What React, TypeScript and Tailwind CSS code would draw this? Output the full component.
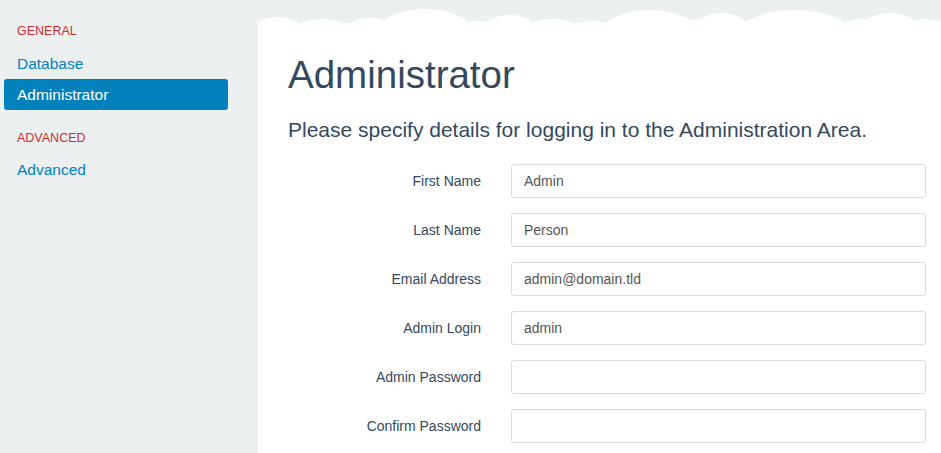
const clouds: [number, number, number][] = [
  [20, 17, 24],
  [64, 19, 32],
  [112, 18, 22],
  [167, 9, 48],
  [220, 21, 20],
  [252, 15, 25],
  [295, 19, 32],
  [335, 21, 24],
  [392, 10, 50],
  [440, 19, 15],
  [464, 13, 25],
  [537, 10, 62],
  [602, 19, 18],
  [632, 13, 26],
  [667, 19, 25],
];

const fields = [
  { label: 'First Name', value: 'Admin' },
  { label: 'Last Name', value: 'Person' },
  { label: 'Email Address', value: 'admin@domain.tld' },
  { label: 'Admin Login', value: 'admin' },
  { label: 'Admin Password', value: '' },
  { label: 'Confirm Password', value: '' },
];

function CloudEdge() {
  return (
    <svg width="683" height="30" viewBox="0 0 683 30" className="block shrink-0">
      {clouds.map(([cx, top, rx], i) => (
        <ellipse key={i} cx={cx} cy={top + rx * 0.5} rx={rx} ry={rx * 0.5} fill="#ffffff" />
      ))}
      <rect x="0" y="23" width="683" height="7" fill="#ffffff" />
    </svg>
  );
}

export default function App() {
  return (
    <div className="flex h-[453px] w-[941px] overflow-hidden bg-[#ecf0f1] font-['Liberation_Sans',Arial,sans-serif]">
      <aside className="w-[258px] shrink-0 pt-[24px]">
        <p className="px-[17px] text-[12.5px] leading-[14px] text-[#c9302c]">GENERAL</p>
        <a className="mt-[17px] block px-[17px] text-[15.5px] leading-[18px] text-[#0081c2]">Database</a>
        <a className="ml-[4px] mt-[6px] block w-[224px] rounded-[3px] bg-[#0081bc] px-[13px] py-[6px] text-[15.5px] leading-[19px] text-white">
          Administrator
        </a>
        <p className="mt-[21px] px-[17px] text-[12.5px] leading-[14px] text-[#c9302c]">ADVANCED</p>
        <a className="mt-[16px] block px-[17px] text-[15.5px] leading-[18px] text-[#0081c2]">Advanced</a>
      </aside>

      <main className="flex min-w-0 flex-1 flex-col">
        <CloudEdge />
        <div className="flex-1 bg-white pl-[30px] pr-[15px]">
          <h1 className="mt-[25px] text-[38.5px] leading-[40px] text-[#34495e]">Administrator</h1>
          <p className="mt-[23px] text-[21px] leading-[24px] text-[#34495e]">
            Please specify details for logging in to the Administration Area.
          </p>
          <div className="mt-[22px] flex flex-col gap-[15px]">
            {fields.map((f) => (
              <div key={f.label} className="flex items-center">
                <label className="w-[193px] shrink-0 text-right text-[14px] text-[#34495e]">{f.label}</label>
                <input
                  readOnly
                  value={f.value}
                  className="ml-[30px] h-[34px] w-[415px] rounded-[3px] border border-[#dcdcdc] px-[12px] text-[14px] text-[#555555] outline-none"
                />
              </div>
            ))}
          </div>
        </div>
      </main>
    </div>
  );
}
